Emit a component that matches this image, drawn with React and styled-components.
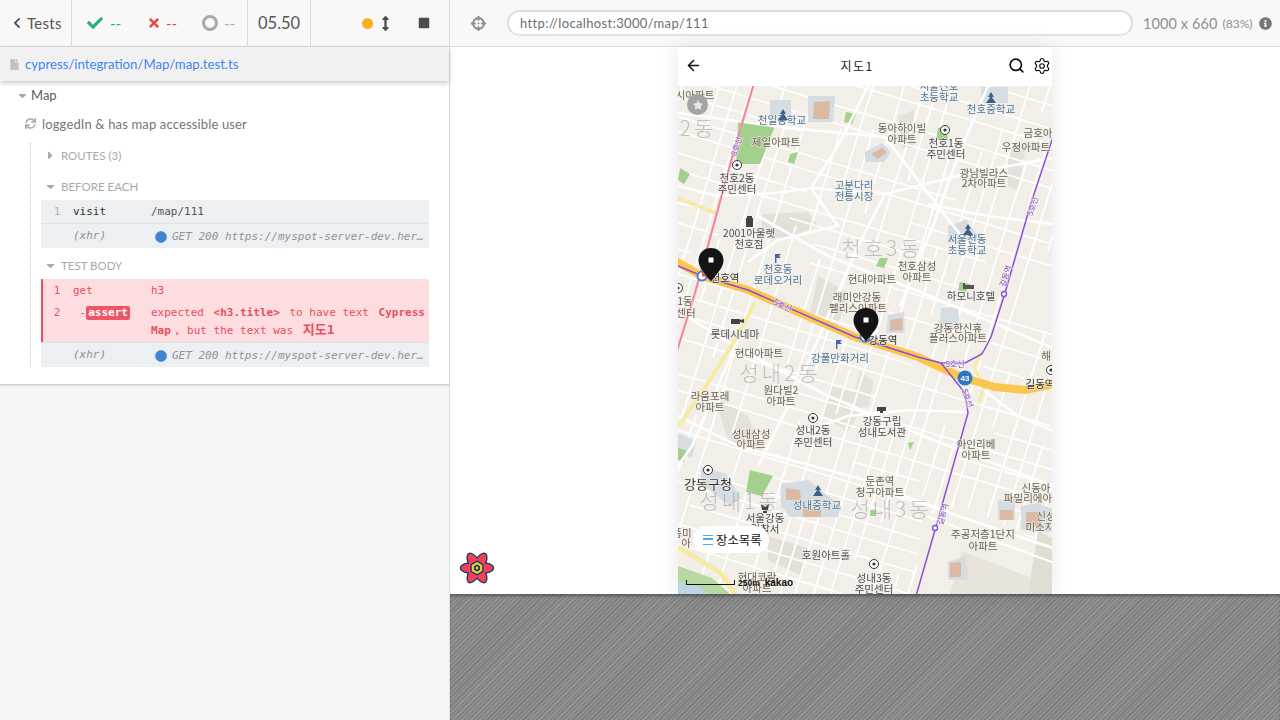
import React from 'react';
import styled, {createGlobalStyle} from 'styled-components';
import {
    FaChevronLeft, FaCheck, FaTimes, FaArrowsAltV, FaStop, FaFile, FaSync,
    FaCaretDown, FaCaretRight, FaCircle, FaCrosshairs, FaInfoCircle, FaStar,
} from 'react-icons/fa';
import {ArrowLeft, Search, Settings} from 'lucide-react';

const uiFont = `Lato, "Noto Sans CJK KR", sans-serif`;
const monoFont = `"DejaVu Sans Mono", "Noto Sans CJK KR", monospace`;
const cjkFont = `"Noto Sans CJK KR", sans-serif`;

const GlobalStyle = createGlobalStyle`
    * { box-sizing:border-box; }
    html, body { margin:0; padding:0; width:1280px; height:720px; overflow:hidden; }
    body { font-family:${uiFont}; background:#f6f6f6; }
`;

const Page = styled.div`
    width:1280px;
    height:720px;
    display:flex;
`;

/* left panel */
const Reporter = styled.aside`
    width:450px;
    height:720px;
    flex:none;
    display:flex;
    flex-direction:column;
    background:#f6f6f6;
    border-right:1px solid #dedede;
`;

const StatsBar = styled.header`
    height:47px;
    flex:none;
    display:flex;
    background:#f8f8f8;
    border-bottom:1px solid #dddddd;
    color:#555;
`;

const Segment = styled.div`
    width:${p => p.$width}px;
    display:flex;
    align-items:center;
    border-right:${p => (p.$last ? 'none' : '1px solid #dddddd')};
    padding-left:${p => p.$pad || 0}px;
`;

const BackLink = styled.span`
    display:flex;
    align-items:center;
    gap:4px;
    font-size:15px;
    color:#555;
    letter-spacing:.3px;
`;

const Stat = styled.div`
    width:${p => p.$width}px;
    display:flex;
    align-items:center;
    gap:${p => p.$gap}px;
    font-size:15px;
    color:${p => p.$color};
`;

const Ring = styled.span`
    width:16px;
    height:16px;
    border:3px solid #aaa;
    border-radius:50%;
`;

const Duration = styled.span`
    font-size:16.5px;
    color:#555;
`;

const Dot = styled.span`
    width:11px;
    height:11px;
    border-radius:50%;
    background:#fbaf1b;
`;

const ControlIcon = styled.span`
    display:flex;
    margin-left:${p => p.$gap}px;
    color:#4d4d4d;
`;

const SpecBar = styled.div`
    height:34px;
    flex:none;
    display:flex;
    align-items:center;
    gap:5px;
    padding-left:9px;
    background:#f1f1f1;
    color:#3d86f5;
    font-size:13.2px;
    box-shadow:0 2px 5px rgba(0,0,0,.22);
    position:relative;
    z-index:1;
    svg { color:#c2c2c2; }
`;

const Runnables = styled.section`
    background:#fff;
    padding-bottom:17px;
    border-bottom:1px solid #cfcfcf;
    box-shadow:0 1px 2px rgba(0,0,0,.12);
`;

const SuiteRow = styled.div`
    height:${p => p.$height}px;
    display:flex;
    align-items:center;
    gap:${p => p.$gap}px;
    padding-left:${p => p.$pad}px;
    font-size:${p => p.$size}px;
    letter-spacing:${p => p.$spacing || 0}px;
    color:${p => p.$color};
    svg { color:#a8a8a8; }
`;

const HookList = styled.div`
    margin:5px 20px 0 30px;
    padding-left:10px;
    border-left:1px dotted #c4c4c4;
`;

const HookTitle = styled.div`
    height:26px;
    margin-top:${p => (p.$first ? 0 : 5)}px;
    padding:0 0 2px 3px;
    display:flex;
    align-items:center;
    gap:4px;
    font-size:11.5px;
    color:#a9a9a9;
    text-transform:uppercase;
    svg { color:#aaa; }
`;

const CommandRow = styled.div`
    display:grid;
    grid-template-columns:32px 78px 1fr;
    font-family:${monoFont};
    font-size:11px;
    line-height:18px;
    min-height:${p => p.$height}px;
    padding:${p => p.$padTop}px 4px 0 0;
    background:${p => (p.$failed ? '#fddde0' : '#edf0f3')};
    color:${p => (p.$failed ? '#e94f5f' : '#555')};
    border-bottom:${p => (p.$divider ? '1px solid #dfe3e7' : 'none')};
    box-shadow:${p => (p.$failed ? 'inset 2px 0 0 #e94f5f' : 'none')};
`;

const CommandNumber = styled.span`
    text-align:center;
    color:${p => (p.$failed ? '#e94f5f' : '#aeb4bc')};
`;

const CommandMethod = styled.span`
    font-style:${p => (p.$xhr ? 'italic' : 'normal')};
    color:${p => (p.$xhr ? '#8c8f94' : p.$dark ? '#333' : 'inherit')};
`;

const AssertTag = styled.span`
    display:inline-block;
    padding:0 2px;
    height:14px;
    line-height:14px;
    border-radius:2px;
    background:#ee5566;
    color:#fff;
    font-weight:700;
`;

const CommandMessage = styled.span`
    min-width:0;
    white-space:normal;
    strong {
        padding:0 3px;
        font-weight:700;
    }
`;

const StrongKorean = styled.strong`
    font-size:13px;
    line-height:1;
`;

const XhrMessage = styled.span`
    min-width:0;
    margin-top:-1px;
    display:flex;
    align-items:center;
    gap:5px;
    padding-left:4px;
    font-style:italic;
    color:#8f939a;
    svg { flex:none; color:#3d86d0; }
`;

const Clip = styled.span`
    overflow:hidden;
    text-overflow:ellipsis;
    white-space:nowrap;
`;

/* right panel */
const Runner = styled.main`
    flex:1;
    display:flex;
    flex-direction:column;
    min-width:0;
`;

const UrlBar = styled.header`
    height:47px;
    flex:none;
    display:flex;
    align-items:center;
    padding:0 6px 0 21px;
    background:#f8f8f8;
    border-bottom:1px solid #dddddd;
    color:#8a8a8a;
    white-space:nowrap;
    svg { flex:none; }
`;

const UrlInput = styled.div`
    width:626px;
    height:26px;
    flex:none;
    margin-left:21px;
    padding-left:11px;
    display:flex;
    align-items:center;
    background:#fff;
    border:2px solid #dcdcdc;
    border-bottom-color:#e4e4e4;
    border-radius:13px;
    font-size:13px;
    letter-spacing:.35px;
    color:#6f6f6f;
`;

const Viewport = styled.span`
    margin-left:10px;
    font-size:14.5px;
    letter-spacing:.1px;
    color:#909090;
`;

const Zoom = styled.span`
    margin:1px 7px 0 5px;
    font-size:12px;
    color:#909090;
`;

const Stage = styled.div`
    height:547px;
    flex:none;
    display:flex;
    justify-content:center;
    background:#fff;
    position:relative;
`;

const Phone = styled.div`
    width:374px;
    display:flex;
    flex-direction:column;
    background:#fff;
    box-shadow:0 0 18px rgba(0,0,0,.1);
`;

const PhoneNav = styled.nav`
    height:39px;
    flex:none;
    display:grid;
    grid-template-columns:1fr auto 1fr;
    align-items:center;
    padding:0 1px 2px 7px;
    color:#111;
`;

const PhoneTitle = styled.h3`
    margin:0 22px 0 0;
    font-family:${cjkFont};
    font-size:12px;
    font-weight:400;
    letter-spacing:1.4px;
    color:#222;
`;

const NavIcons = styled.div`
    justify-self:end;
    display:flex;
    align-items:center;
    gap:8px;
`;

const MapCanvas = styled.div`
    flex:1;
    position:relative;
    overflow:hidden;
    background:#f2efe9;
`;

const MapDrawing = styled.svg`
    display:block;
    filter:blur(.45px);
`;

const labelStyles = {
    apt: 'fill:#6d6151; font-size:10.5px;',
    poi: 'fill:#4e4e4e; font-size:10.5px;',
    blue: 'fill:#4f7599; font-size:10.5px;',
    dark: 'fill:#2f2f2f; font-size:10.5px;',
    city: 'fill:#333; font-size:13px;',
    area: 'fill:#8f8f8f; fill-opacity:.5; font-size:21px; font-weight:300; letter-spacing:3px; stroke:none;',
    line: 'fill:#8b4fd0; font-size:8px;',
};

const MapLabel = styled.text`
    font-family:${cjkFont};
    text-anchor:middle;
    dominant-baseline:central;
    paint-order:stroke;
    stroke:#f2efe9;
    stroke-opacity:.75;
    stroke-width:1.5px;
    ${p => labelStyles[p.$kind]}
`;

const StarButton = styled.span`
    position:absolute;
    left:9px;
    top:8px;
    width:21px;
    height:21px;
    display:flex;
    align-items:center;
    justify-content:center;
    border-radius:50%;
    background:#a4a4a4;
    color:#e8e8e8;
`;

const Pin = styled.svg`
    position:absolute;
    left:${p => p.$x}px;
    top:${p => p.$y}px;
`;

const PlaceListButton = styled.button`
    position:absolute;
    left:15px;
    top:440px;
    width:76px;
    height:27px;
    padding:0 0 0 10px;
    display:flex;
    align-items:center;
    gap:3px;
    border:none;
    border-radius:14px;
    background:#fff;
    color:#111;
    font-family:${cjkFont};
    font-size:12.4px;
`;

const ListBars = styled.span`
    width:10px;
    height:10px;
    border-top:1.5px solid #4aa8f5;
    border-bottom:1.5px solid #4aa8f5;
    position:relative;
    &::after {
        content:'';
        position:absolute;
        left:0;
        right:0;
        top:2.75px;
        height:1.5px;
        background:#4aa8f5;
    }
`;

const MapFooter = styled.div`
    position:absolute;
    left:8px;
    bottom:6px;
    display:flex;
    align-items:center;
    font-family:"Liberation Sans", sans-serif;
    color:#111;
`;

const ScaleBar = styled.span`
    width:49px;
    height:5px;
    border:1.5px solid #111;
    border-top:none;
`;

const ScaleText = styled.span`
    margin-left:3px;
    font-size:8.5px;
    font-weight:700;
`;

const KakaoText = styled.span`
    margin-left:5px;
    font-size:10px;
    font-weight:700;
`;

const AtomBadge = styled.svg`
    position:absolute;
    left:9px;
    bottom:8px;
`;

const Hatch = styled.div`
    flex:1;
    background:repeating-linear-gradient(-45deg, #808080 0 1.6px, #929292 1.6px 3.2px);
    box-shadow:inset 0 3px 3px -1px rgba(0,0,0,.35);
`;

/* map data, in canvas pixels */
const schools = [
    '92,14 113,14 113,34 92,34',
    '130,10 157,10 155,36 130,36',
    '303,1 330,1 330,17 303,17',
    '187,66 204,57 213,66 206,76 187,76',
    '270,140 288,134 300,150 294,157 270,157',
    '263,222 280,221 282,244 261,244',
    '210,229 226,226 227,247 208,247',
    '103,398 130,394 163,420 160,431 112,431 103,420',
    '320,414 337,411 337,434 320,434',
    '343,420 360,417 375,424 375,446 343,444',
    '23,381 48,388 63,412 52,420 23,398',
    '0,347 18,355 14,371 0,369',
];

const sportsFields = [
    '136,16 152,15 151,33 135,33',
    '193,68 204,62 209,66 200,73',
    '108,402 122,404 123,414 108,414',
    '125,421 143,424 143,431 125,431',
    '322,424 335,424 335,434 322,434',
    '348,426 363,426 363,441 348,441',
    '212,234 224,232 225,244 212,245',
];

const parks = [
    '60,36 97,40 82,78 58,78',
    '168,26 178,28 174,38 166,36',
    '260,42 268,40 270,54 258,54',
    '112,68 120,66 116,78 110,76',
    '2,82 12,88 6,98 0,94',
    '202,172 210,172 206,182 198,180',
    '282,196 292,198 288,206 280,204',
    '72,384 95,390 84,410 68,406',
    '230,357 236,356 232,364',
    '0,362 8,364 6,376 0,374',
    '192,424 198,424 198,430 192,430',
];

const blocks = [
    ['#e4e0d8', '84,128 130,126 140,140 105,154 84,146'],
    ['#e5e1da', '140,190 170,206 160,240 130,236'],
    ['#e6e2db', '182,285 196,296 190,322 174,314'],
    ['#e5e1d9', '36,310 70,330 84,366 52,360'],
    ['#e6e2da', '152,300 190,310 170,346 146,330'],
    ['#e4e0d8', '90,450 130,462 124,490 90,474'],
    ['#e5e1da', '220,30 236,24 236,62 224,62'],
    ['#e5e1da', '330,60 348,60 340,104 330,100'],
];

const seeded = (seed) => {
    let s = seed;
    return () => {
        s = (s * 16807) % 2147483647;
        return s / 2147483647;
    };
};

// small streets are a broken lattice at the angle of the real blocks
const buildLattice = () => {
    const rand = seeded(4711);
    const parts = [];
    for (let c = -160; c < 560; c += 14 + rand() * 12) {
        let x = -30;
        while (x < 400) {
            const len = 40 + rand() * 110;
            if (rand() > .18) {
                parts.push(`M${x.toFixed(0)} ${(c + x * .3).toFixed(0)}L${(x + len).toFixed(0)} ${(c + (x + len) * .3).toFixed(0)}`);
            }
            x += len;
        }
    }
    for (let c = -40; c < 560; c += 12 + rand() * 11) {
        let y = -30;
        while (y < 540) {
            const len = 30 + rand() * 90;
            if (rand() > .25) {
                parts.push(`M${(c - y * .31).toFixed(0)} ${y.toFixed(0)}L${(c - (y + len) * .31).toFixed(0)} ${(y + len).toFixed(0)}`);
            }
            y += len;
        }
    }
    return parts.join('');
};
const lattice = buildLattice();

const mainRoads = [
    '0,27 110,42 207,51 273,137 300,170',
    '0,100 40,110 96,107 134,102 207,108 287,88 375,72',
    '133,102 160,140 100,154 70,176',
    '207,108 180,160 150,230 120,300 80,380',
    '80,130 150,170 240,205 375,262',
    '0,225 60,262 150,310 260,356 375,400',
    '0,330 60,360 180,392 280,430 375,462',
    '190,0 160,60 133,102',
    '310,0 280,70 255,140 222,220',
    '375,138 310,130 250,118',
    '120,348 170,330 230,324 290,326',
    '60,254 40,300 14,360 0,380',
    '300,300 340,330 375,345',
];

const labels = [
    ['시아파트', 17, 8, 'apt'], ['천일중학교', 104, 33, 'blue'], ['제일아파트', 98, 55, 'apt'],
    ['동아하이빌', 224, 41, 'apt'], ['아파트', 224, 52, 'apt'], ['천호1동', 268, 56, 'poi'], ['주민센터', 268, 67, 'poi'],
    ['서울신호', 261, -1, 'blue'], ['초등학교', 261, 10, 'blue'], ['천호중학교', 313, 22, 'blue'], ['금호아', 360, 46, 'apt'],
    ['우정아파트', 348, 60, 'apt'], ['광남빌라스', 306, 86, 'apt'], ['2차아파트', 306, 96, 'apt'],
    ['고분다리', 176, 98, 'blue'], ['전통시장', 176, 109, 'blue'], ['천호2동', 59, 91, 'poi'], ['주민센터', 59, 102, 'poi'],
    ['2001아울렛', 71, 146, 'poi'], ['천호점', 71, 157, 'poi'], ['천호3동', 204, 161, 'area'], ['2동', 20, 41, 'area'],
    ['서울천동', 289, 152, 'blue'], ['초등학교', 289, 163, 'blue'], ['천호삼성', 239, 179, 'apt'], ['아파트', 239, 190, 'apt'],
    ['천호동', 100, 182, 'blue'], ['로데오거리', 100, 193, 'blue'], ['현대아파트', 194, 192, 'apt'], ['하모니호텔', 293, 209, 'poi'],
    ['천호역', 47, 191, 'dark'], ['래미안강동', 179, 210, 'apt'], ['팰리스아파트', 180, 221, 'apt'], ['1동', 7, 214, 'apt'], ['센터', 8, 226, 'apt'],
    ['롯데시네마', 57, 247, 'poi'], ['강동한신휴', 280, 241, 'apt'], ['플러스아파트', 280, 251, 'apt'], ['강동역', 205, 253, 'dark'],
    ['현대아파트', 81, 266, 'apt'], ['강풀만화거리', 162, 271, 'blue'], ['성내2동', 102, 286, 'area'], ['해', 368, 269, 'apt'],
    ['5호선', 277, 277, 'line'], ['길동역', 362, 297, 'dark'], ['원다빌2', 103, 303, 'apt'], ['아파트', 103, 314, 'apt'],
    ['라움포레', 32, 309, 'apt'], ['아파트', 32, 320, 'apt'], ['강동구립', 204, 334, 'poi'], ['성내도서관', 204, 345, 'poi'],
    ['성내2동', 135, 343, 'poi'], ['주민센터', 135, 355, 'poi'], ['성내삼성', 73, 347, 'apt'], ['아파트', 73, 357, 'apt'],
    ['아인리베', 298, 357, 'apt'], ['아파트', 298, 368, 'apt'], ['강동구청', 30, 397, 'city'], ['둔촌역', 202, 394, 'apt'], ['청구아파트', 202, 405, 'apt'],
    ['신동아', 358, 401, 'apt'], ['파밀리에아', 350, 411, 'apt'], ['성내1동', 62, 414, 'area'], ['성내3동', 213, 422, 'area'],
    ['성내중학교', 139, 418, 'blue'], ['서울강동', 87, 431, 'poi'], ['경찰서', 87, 442, 'poi'], ['신성', 368, 429, 'apt'], ['미소지', 362, 440, 'apt'],
    ['주공저층1단지', 305, 447, 'apt'], ['아파트', 305, 459, 'apt'], ['풍미', 4, 446, 'apt'], ['아', 8, 456, 'apt'], ['호원아트홀', 148, 468, 'poi'],
    ['현대코람', 79, 490, 'apt'], ['아파트', 79, 501, 'apt'], ['성내3동', 196, 491, 'poi'], ['주민센터', 196, 502, 'poi'],
];

const rotatedLabels = [
    ['5호선', 105, 219, 26], ['8호선', 58, 60, -72], ['5호선', 354, 120, -72], ['길동역', 327, 190, -72],
    ['5호선', 290, 312, 70], ['길동역', 264, 428, -76],
];

const civicMarks = [[59, 79], [267, 44], [135, 332], [30, 384], [196, 478], [373, 284], [0, 202]];
const flags = [[100, 172], [161, 258]];

const highway = '-4,174 24,190 70,204 120,226 177,251 187,254 240,271 283,291 317,301 347,304 378,298';

const MapArt = () => (
    <MapDrawing width="374" height="508" viewBox="0 0 374 508">
        <rect width="374" height="508" fill="#f2efe9" />
        {blocks.map(([fill, points]) => <polygon key={points} points={points} fill={fill} />)}
        <path d={lattice} stroke="#fff" strokeWidth="1.8" fill="none" />
        {schools.map(points => <polygon key={points} points={points} fill="#d5dce2" />)}
        {sportsFields.map(points => <polygon key={points} points={points} fill="#dcb9a2" />)}
        {parks.map(points => <polygon key={points} points={points} fill="#a4d08e" />)}
        {/* apartment blocks in the lower right have almost no streets */}
        <polygon points="245,430 285,420 374,462 374,508 235,508" fill="#f2efe9" />
        <polygon points="284,465 374,500 374,508 272,508" fill="#e8e4da" />
        <polygon points="360,445 374,452 374,508 350,508" fill="#e2ddd3" />
        <polyline points="248,430 374,476" stroke="#fff" strokeWidth="2" fill="none" />
        <polygon points="270,476 288,470 290,494 270,494" fill="#d5dce2" />
        <polygon points="272,477 283,476 283,491 272,491" fill="#dcb9a2" />
        {mainRoads.map(points => <polyline key={points} points={points} stroke="#fff" strokeWidth="2.6" fill="none" />)}
        {/* river and riverside park */}
        <polygon points="0,480 34,492 52,508 0,508" fill="#b9d7a2" />
        <polygon points="0,496 20,500 30,508 0,508" fill="#bcd6e6" />
        {/* pale yellow arterial roads */}
        <polyline points="0,461 43,487 57,508" stroke="#f6eba6" strokeWidth="5" fill="none" />
        <polyline points="0,112 38,127" stroke="#f6eba6" strokeWidth="3.5" fill="none" />
        <polyline points="77,217 57,254 28,300 0,341" stroke="#f6eba6" strokeWidth="4" fill="none" />
        <polyline points="304,265 296,282 306,300 300,318" stroke="#f6eba6" strokeWidth="3" fill="none" />
        <polyline points="77,-6 57,61 17,207 -2,268" stroke="#f5a7a7" strokeWidth="2.4" fill="none" />
        <polyline points="77,-6 57,61 17,207 -2,268" stroke="#f47ca6" strokeWidth="1.2" fill="none" />
        <polyline points={highway} stroke="#fbc64e" strokeWidth="8" fill="none" />
        <polyline points="0,180 24,190 70,204 177,251 187,254 240,271 263,277 287,277 304,268 313,251 327,207 353,117 376,48" stroke="#8a4fd6" strokeWidth="1.5" fill="none" />
        <polyline points="263,277 287,307 290,327 257,444 238,510" stroke="#8a4fd6" strokeWidth="1.5" fill="none" />
        <circle cx="326" cy="208" r="2.5" fill="#fff" stroke="#8a4fd6" strokeWidth="1.4" />
        <circle cx="257" cy="442" r="2.5" fill="#fff" stroke="#8a4fd6" strokeWidth="1.4" />
        {labels.map(([text, x, y, kind]) => (
            <MapLabel key={`${text}${x}${y}`} x={x} y={y} $kind={kind}>{text}</MapLabel>
        ))}
        {rotatedLabels.map(([text, x, y, angle]) => (
            <MapLabel key={`${text}${x}`} x={x} y={y} $kind="line" transform={`rotate(${angle} ${x} ${y})`}>{text}</MapLabel>
        ))}
        {civicMarks.map(([x, y]) => (
            <g key={`${x}${y}`}>
                <circle cx={x} cy={y} r="4.5" fill="#fff" stroke="#333" strokeWidth="1" />
                <circle cx={x} cy={y} r="1.6" fill="#333" />
            </g>
        ))}
        {flags.map(([x, y]) => (
            <path key={x} d={`M${x - 3} ${y + 5}V${y - 4}H${x + 3}L${x + 1} ${y - 2}L${x + 3} ${y}H${x - 1.6}V${y + 5}Z`} fill="#4a62a8" />
        ))}
        <path d="M105 27l-5 7h10zM105 23l-3 5h6z" fill="#3f5f83" />
        <path d="M313 10l-5 7h10zM313 6l-3 5h6z" fill="#3f5f83" />
        <path d="M290 142l-5 7h10zM290 138l-3 5h6z" fill="#3f5f83" />
        <path d="M140 403l-5 7h10zM140 399l-3 5h6z" fill="#3f5f83" />
        <path d="M68 132h7v9h-7zM69 130h5v3h-5z" fill="#444" />
        <path d="M53 233h9v5h-9zM62 234l4-1v4l-4-1z" fill="#444" />
        <path d="M199 321h9v4h-3v2h-3v-2h-3z" fill="#444" />
        <path d="M285 197h2v6h-2zM287 199h9v4h-9z" fill="#555" />
        <path d="M83 418l4 3 4-3-1 6h-6zM85 425h4v2h-4z" fill="#444" />
        <circle cx="24" cy="190" r="4.5" fill="#fff" stroke="#4a7fd1" strokeWidth="2" />
        <path d="M24 186a4.5 4.5 0 0 1 4.5 4.5h-4.5z" fill="#e45b45" />
        <circle cx="187" cy="251" r="4.5" fill="#fff" stroke="#4a7fd1" strokeWidth="2" />
        <circle cx="287" cy="292" r="7.5" fill="#2e76bf" />
        <text x="287" y="295" fontSize="8" fontWeight="700" textAnchor="middle" fill="#fff" fontFamily="Liberation Sans">43</text>
    </MapDrawing>
);

const MapPin = ({x, y}) => (
    <Pin $x={x} $y={y} width="26" height="34" viewBox="0 0 26 34">
        <path d="M13 0C5.600 0 .5 5.400.5 12.500c0 7.600 8.400 15 12.500 21 4.100-6 12.500-13.400 12.500-21C25.500 5.400 20.400 0 13 0z" fill="#141414" />
        <rect x="10.500" y="9.500" width="5" height="5" fill="#fff" />
    </Pin>
);

const AtomIcon = () => (
    <AtomBadge width="36" height="36" viewBox="-18 -18 36 36">
        {[0, 60, 120].map(angle => (
            <ellipse key={angle} rx="16.500" ry="6" transform={`rotate(${angle})`} fill="#f0405c" stroke="#153a5b" strokeWidth="1.500" />
        ))}
        {[0, 60, 120].map(angle => (
            <ellipse key={angle} rx="15.800" ry="5.300" transform={`rotate(${angle})`} fill="#f0405c" />
        ))}
        <polygon points="0,-7.500 6.500,-3.800 6.500,3.800 0,7.500 -6.500,3.800 -6.500,-3.800" fill="#153a5b" />
        <polygon points="0,-6 5.200,-3 5.200,3 0,6 -5.200,3 -5.200,-3" fill="#e8cf3a" />
        <polygon points="0,-3.400 3,-1.700 3,1.700 0,3.400 -3,1.700 -3,-1.700" fill="#153a5b" />
        <circle r="1.400" fill="#e8cf3a" />
    </AtomBadge>
);

const XhrRow = () => (
    <CommandRow $height={24} $padTop={3}>
        <span />
        <CommandMethod $xhr>(xhr)</CommandMethod>
        <XhrMessage>
            <FaCircle size={12} />
            <Clip>GET 200 https://myspot-server-dev.herokuapp.com/api/maps/111</Clip>
        </XhrMessage>
    </CommandRow>
);

const App = () => (
    <Page>
        <GlobalStyle />
        <Reporter>
            <StatsBar>
                <Segment $width={72} $pad={11}>
                    <BackLink><FaChevronLeft size={12} /> Tests</BackLink>
                </Segment>
                <Segment $width={176} $pad={15}>
                    <Stat $width={60} $gap={7} $color="#27ae8b"><FaCheck size={16} />--</Stat>
                    <Stat $width={55} $gap={5} $color="#e9483f"><FaTimes size={14} />--</Stat>
                    <Stat $width={40} $gap={6} $color="#aaa"><Ring />--</Stat>
                </Segment>
                <Segment $width={63} $pad={10}>
                    <Duration>05.50</Duration>
                </Segment>
                <Segment $width={138} $pad={51} $last>
                    <Dot />
                    <ControlIcon $gap={5}><FaArrowsAltV size={15} /></ControlIcon>
                    <ControlIcon $gap={25}><FaStop size={12} /></ControlIcon>
                </Segment>
            </StatsBar>
            <SpecBar><FaFile size={11} />cypress/integration/Map/map.test.ts</SpecBar>
            <Runnables>
                <SuiteRow $height={28} $gap={2} $pad={16} $size={13} $color="#5c5c5c">
                    <FaCaretDown size={13} />Map
                </SuiteRow>
                <SuiteRow $height={29} $gap={6} $pad={25} $size={13} $spacing={.15} $color="#757575">
                    <FaSync size={11} />loggedIn &amp; has map accessible user
                </SuiteRow>
                <HookList>
                    <HookTitle $first><FaCaretRight size={13} />Routes (3)</HookTitle>
                    <HookTitle><FaCaretDown size={13} />Before each</HookTitle>
                    <CommandRow $height={24} $padTop={3} $divider>
                        <CommandNumber>1</CommandNumber>
                        <CommandMethod $dark>visit</CommandMethod>
                        <span>/map/111</span>
                    </CommandRow>
                    <XhrRow />
                    <HookTitle><FaCaretDown size={13} />Test body</HookTitle>
                    <CommandRow $failed $height={23} $padTop={3}>
                        <CommandNumber $failed>1</CommandNumber>
                        <CommandMethod>get</CommandMethod>
                        <span>h3</span>
                    </CommandRow>
                    <CommandRow $failed $height={41} $padTop={2} $divider>
                        <CommandNumber $failed>2</CommandNumber>
                        <CommandMethod>&nbsp;-<AssertTag>assert</AssertTag></CommandMethod>
                        <CommandMessage>
                            expected <strong>&lt;h3.title&gt;</strong> to have text <strong>Cypress Map</strong>, but the text was <StrongKorean>지도1</StrongKorean>
                        </CommandMessage>
                    </CommandRow>
                    <XhrRow />
                </HookList>
            </Runnables>
        </Reporter>
        <Runner>
            <UrlBar>
                <FaCrosshairs size={15} />
                <UrlInput>http://localhost:3000/map/111</UrlInput>
                <Viewport>1000 x 660</Viewport>
                <Zoom>(83%)</Zoom>
                <FaInfoCircle size={13} color="#777" />
            </UrlBar>
            <Stage>
                <Phone>
                    <PhoneNav>
                        <ArrowLeft size={17} strokeWidth={2.2} />
                        <PhoneTitle>지도1</PhoneTitle>
                        <NavIcons>
                            <Search size={17} strokeWidth={2.4} />
                            <Settings size={18} strokeWidth={1.6} />
                        </NavIcons>
                    </PhoneNav>
                    <MapCanvas>
                        <MapArt />
                        <StarButton><FaStar size={10} /></StarButton>
                        <MapPin x={20} y={162} />
                        <MapPin x={175} y={222} />
                        <PlaceListButton><ListBars />장소목록</PlaceListButton>
                        <MapFooter>
                            <ScaleBar />
                            <ScaleText>250m</ScaleText>
                            <KakaoText>kakao</KakaoText>
                        </MapFooter>
                    </MapCanvas>
                </Phone>
                <AtomIcon />
            </Stage>
            <Hatch />
        </Runner>
    </Page>
);

export default App;
